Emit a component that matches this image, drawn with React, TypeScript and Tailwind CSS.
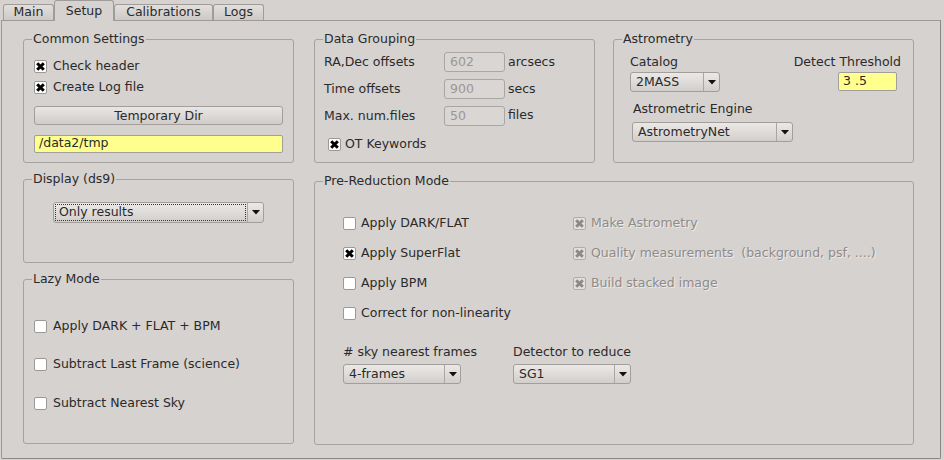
import React from "react"

// Qt "Setup" page of the pipeline GUI, cleanlooks-style widgets

const Box = ({ checked = false, disabled = false }: { checked?: boolean; disabled?: boolean }) => (
  <span
    className={`flex h-[13px] w-[13px] shrink-0 items-center justify-center rounded-[2px] border ${
      disabled ? "border-[#b0acaa] bg-[#e2e0de]" : "border-[#9c9895] bg-white"
    }`}
  >
    {checked && (
      <svg width="9" height="9" viewBox="0 0 9 9">
        <path d="M1.2 1.2L7.8 7.8M7.8 1.2L1.2 7.8" stroke={disabled ? "#8c8987" : "#000"} strokeWidth="3" />
      </svg>
    )}
  </span>
)

const Check = ({
  label,
  checked,
  disabled,
  className = "",
}: {
  label: string
  checked?: boolean
  disabled?: boolean
  className?: string
}) => (
  <label className={`flex h-[20px] items-center ${className}`}>
    <Box checked={checked} disabled={disabled} />
    <span className={disabled ? "text-[#8e8b89] [text-shadow:1px_1px_0_#ecebea]" : ""}>{label}</span>
  </label>
)

const Arrow = () => (
  <svg width="8" height="5" viewBox="0 0 8 5">
    <path d="M0 0H8L4 4.5Z" fill="#111" />
  </svg>
)

const Combo = ({ text, className, focus = false }: { text: string; className: string; focus?: boolean }) => (
  <div
    className={`flex rounded-[3px] border border-[#a29e9b] bg-linear-to-b from-[#ebe9e7] to-[#d2cecb] ${className}`}
  >
    <div className="flex flex-1 items-center p-px">
      <div
        className={`flex h-full w-full items-center pl-[3px] ${focus ? "border border-dotted border-[#333]" : "border border-transparent"}`}
      >
        {text}
      </div>
    </div>
    <div className="flex w-[16px] items-center justify-center border-l border-[#aaa6a3]">
      <Arrow />
    </div>
  </div>
)

const Group = ({ title, className, children }: { title: string; className: string; children?: React.ReactNode }) => (
  <fieldset className={`rounded-[3px] border border-[#a6a29f] ${className}`}>
    <legend className="ml-[8px] px-px leading-[16px]">{title}</legend>
    {children}
  </fieldset>
)

const Field = ({ value, className = "" }: { value: string; className?: string }) => (
  <div
    className={`flex h-[20px] w-[61px] items-center rounded-[3px] border border-[#aaa6a3] bg-[#d9d6d4] pl-[5px] text-[#9a9795] ${className}`}
  >
    {value}
  </div>
)

const Tab = ({ label, active = false, className }: { label: string; active?: boolean; className: string }) => (
  <div
    className={`flex items-center justify-center rounded-t-[3px] border border-b-0 border-[#a09c99] ${
      active ? "relative -mb-px h-[21px] bg-[#d6d2d0]" : "h-[16px] bg-linear-to-b from-[#e2dfdd] to-[#cdc9c6]"
    } ${className}`}
  >
    {label}
  </div>
)

export default function App() {
  return (
    <div className="h-[460px] w-[944px] overflow-hidden bg-[#d6d2d0] font-['DejaVu_Sans',_sans-serif] text-[12.5px] text-[#2a2a2a]">
      <div className="relative z-10 flex h-[20px] items-end pl-[3px]">
        <Tab label="Main" className="w-[51px]" />
        <Tab label="Setup" active className="w-[60px]" />
        <Tab label="Calibrations" className="w-[99px]" />
        <Tab label="Logs" className="w-[51px]" />
      </div>

      <div className="ml-px h-[439px] w-[940px] rounded-b-[2px] border border-[#9d9996] border-r-[#8b8784] border-b-[#8b8784] pt-[10px] pl-[21px]">
        {/* top row */}
        <div className="flex">
          <Group title="Common Settings" className="h-[132px] w-[271px]">
            <div className="px-[10px] pt-[9px]">
              <Check label="Check header" checked className="h-[21px] gap-[6px]" />
              <Check label="Create Log file" checked className="h-[21px] gap-[6px]" />
              <button className="mt-[8px] h-[19px] w-full rounded-[3px] border border-[#a29e9b] bg-linear-to-b from-[#e9e7e5] to-[#d0ccc9]">
                Temporary Dir
              </button>
              <div className="mt-[9px] flex h-[18px] items-center rounded-[2px] border border-[#a29e9b] bg-[#ffff8e] pl-[4px]">
                /data2/tmp
              </div>
            </div>
          </Group>

          <Group title="Data Grouping" className="ml-[20px] h-[132px] w-[281px]">
            <div className="px-[9px] pt-[5px]">
              <div className="grid grid-cols-[120px_61px_auto] gap-y-[7px]">
                <div className="flex items-center">RA,Dec offsets</div>
                <Field value="602" />
                <div className="flex items-end pl-[3px]">arcsecs</div>
                <div className="flex items-center">Time offsets</div>
                <Field value="900" />
                <div className="flex items-center pl-[3px]">secs</div>
                <div className="flex items-end">Max. num.files</div>
                <Field value="50" />
                <div className="flex items-start pl-[3px]">files</div>
              </div>
              <Check label="OT Keywords" checked className="mt-[8px] gap-[4px] pl-[4px]" />
            </div>
          </Group>

          <Group title="Astrometry" className="ml-[18px] h-[132px] w-[301px]">
            <div className="pt-[7px] pr-[12px] pl-[16px]">
              <div className="flex justify-between">
                <div>
                  <div className="leading-[16px]">Catalog</div>
                  <Combo text="2MASS" className="mt-[2px] h-[20px] w-[90px]" />
                </div>
                <div className="flex flex-col items-end">
                  <div className="leading-[16px]">Detect Threshold</div>
                  <div className="mt-[2px] mr-[4px] flex h-[19px] w-[59px] items-center rounded-[2px] border border-[#a29e9b] bg-[#ffff8e] pl-[4px]">
                    3 .5
                  </div>
                </div>
              </div>
              <div className="mt-[9px] pl-[3px] leading-[16px]">Astrometric Engine</div>
              <Combo text="AstrometryNet" className="mt-[5px] ml-[2px] h-[20px] w-[161px]" />
            </div>
          </Group>
        </div>

        {/* bottom row */}
        <div className="mt-[8px] flex">
          <div className="flex w-[271px] flex-col">
            <Group title="Display (ds9)" className="h-[92px] w-full">
              <div className="pt-[15px] pl-[29px]">
                <Combo text="Only results" focus className="h-[21px] w-[211px]" />
              </div>
            </Group>
            <Group title="Lazy Mode" className="mt-[8px] h-[173px] w-full">
              <div className="px-[10px] pt-[29px]">
                <Check label="Apply DARK + FLAT + BPM" className="gap-[6px]" />
                <Check label="Subtract Last Frame (science)" className="mt-[18px] gap-[6px]" />
                <Check label="Subtract Nearest Sky" className="mt-[19px] gap-[6px]" />
              </div>
            </Group>
          </div>

          <Group title="Pre-Reduction Mode" className="mt-[2px] ml-[20px] h-[272px] w-[600px]">
            <div className="pt-[24px] pl-[28px]">
              <div className="grid grid-cols-[230px_auto] gap-y-[10px]">
                <Check label="Apply DARK/FLAT" className="gap-[5px]" />
                <Check label="Make Astrometry" checked disabled className="gap-[5px]" />
                <Check label="Apply SuperFlat" checked className="gap-[5px]" />
                <Check label="Quality measurements  (background, psf, ....)" checked disabled className="gap-[5px] whitespace-pre" />
                <Check label="Apply BPM" className="gap-[5px]" />
                <Check label="Build stacked image" checked disabled className="gap-[5px]" />
                <Check label="Correct for non-linearity" className="gap-[5px]" />
              </div>
              <div className="mt-[21px] flex">
                <div className="w-[170px]">
                  <div className="leading-[16px]">&#35; sky nearest frames</div>
                  <Combo text="4-frames" className="mt-[4px] h-[20px] w-[118px]" />
                </div>
                <div>
                  <div className="leading-[16px]">Detector to reduce</div>
                  <Combo text="SG1" className="mt-[4px] h-[20px] w-[118px]" />
                </div>
              </div>
            </div>
          </Group>
        </div>
      </div>
    </div>
  )
}
